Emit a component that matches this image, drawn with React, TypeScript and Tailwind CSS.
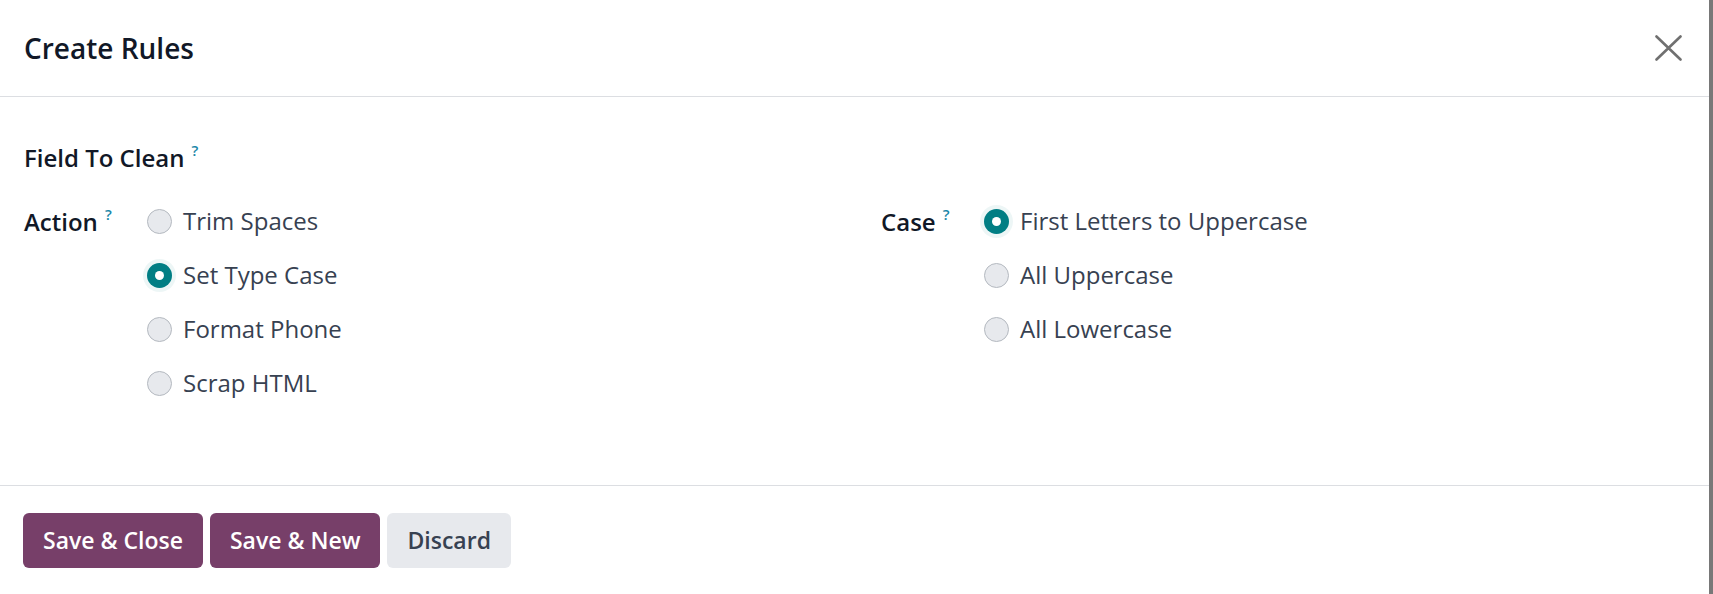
// Create Rules — data cleaning rule dialog

type Option = { label: string; checked?: boolean };

const actions: Option[] = [
  { label: 'Trim Spaces' },
  { label: 'Set Type Case', checked: true },
  { label: 'Format Phone' },
  { label: 'Scrap HTML' },
];

const cases: Option[] = [
  { label: 'First Letters to Uppercase', checked: true },
  { label: 'All Uppercase' },
  { label: 'All Lowercase' },
];

function Label({ text }: { text: string }) {
  return (
    <span className="text-[24px] font-semibold text-[#111827]">
      {text}
      <span className="ml-[7px] align-[11px] text-[15px] font-semibold text-[#1a87a8]">?</span>
    </span>
  );
}

function Radio({ checked }: { checked?: boolean }) {
  if (checked) {
    return (
      <span className="flex h-[25px] w-[25px] shrink-0 items-center justify-center rounded-full bg-[#017e84] shadow-[0_0_0_4px_rgba(1,126,132,0.07)]">
        <span className="h-[9px] w-[9px] rounded-full bg-white" />
      </span>
    );
  }
  return <span className="h-[25px] w-[25px] shrink-0 rounded-full border border-[#b4b9c0] bg-[#e7e9ed]" />;
}

function RadioList({ options }: { options: Option[] }) {
  return (
    <div className="flex flex-col">
      {options.map((o) => (
        <div key={o.label} className="flex h-[54px] items-center gap-[11px]">
          <Radio checked={o.checked} />
          <span className="text-[24px] text-[#374151]">{o.label}</span>
        </div>
      ))}
    </div>
  );
}

function CloseIcon() {
  return (
    <svg width="27" height="26" viewBox="0 0 27 26" fill="none" stroke="#707070" strokeWidth={2.6} strokeLinecap="round">
      <path d="M1.5 1.5L25.5 24.5M25.5 1.5L1.5 24.5" />
    </svg>
  );
}

export default function App() {
  return (
    <div
      className="flex h-[594px] w-full flex-col border-r-4 border-[#787878] bg-white"
      style={{ fontFamily: '"Open Sans", "Noto Sans", sans-serif' }}
    >
      {/* header */}
      <div className="flex h-[97px] shrink-0 items-center justify-between border-b border-[#dcdee2] pl-[24px] pr-[27px]">
        <h1 className="text-[28px] font-semibold text-[#111827]">Create Rules</h1>
        <CloseIcon />
      </div>

      {/* body */}
      <div className="flex flex-1 flex-col pl-[24px] pt-[40px]">
        <div className="flex h-[40px] items-center">
          <Label text="Field To Clean" />
        </div>

        <div className="mt-[17px] flex">
          <div className="flex w-[857px]">
            <div className="flex h-[54px] w-[123px] items-center">
              <Label text="Action" />
            </div>
            <RadioList options={actions} />
          </div>
          <div className="flex">
            <div className="flex h-[54px] w-[103px] items-center">
              <Label text="Case" />
            </div>
            <RadioList options={cases} />
          </div>
        </div>
      </div>

      {/* footer */}
      <div className="flex h-[109px] shrink-0 gap-[7px] border-t border-[#dcdee2] pl-[23px] pt-[27px]">
        <button className="h-[55px] rounded-[6px] bg-[#773f69] px-[20px] text-[23px] font-semibold text-white">
          Save &amp; Close
        </button>
        <button className="h-[55px] rounded-[6px] bg-[#773f69] px-[20px] text-[23px] font-semibold text-white">
          Save &amp; New
        </button>
        <button className="h-[55px] rounded-[6px] bg-[#e7e9ed] px-[20px] text-[23px] font-semibold text-[#374151]">
          Discard
        </button>
      </div>
    </div>
  );
}
